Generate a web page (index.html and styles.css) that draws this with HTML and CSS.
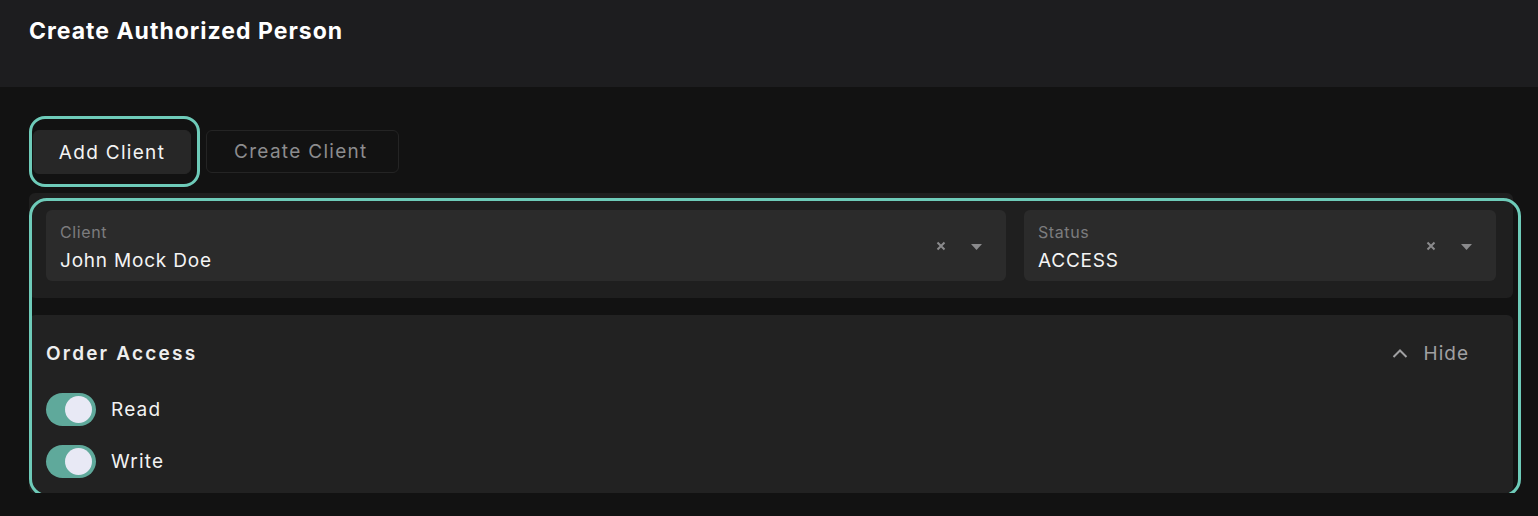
FILE: index.html
```html
<!DOCTYPE html>
<html>
<head>
  <title>Create Authorized Person</title>
  <link rel="stylesheet" href="styles.css">
</head>
<body>
  <header class="page-header">
    <h1 class="page-title">Create Authorized Person</h1>
  </header>

  <main class="page-body">
    <div class="tabs">
      <button class="tab tab-active">Add Client</button>
      <button class="tab">Create Client</button>
    </div>

    <div class="access-card">
      <div class="select-panel">
        <div class="select-field">
          <div class="select-text">
            <span class="select-label">Client</span>
            <span class="select-value">John Mock Doe</span>
          </div>
          <div class="select-icons">
            <svg class="icon-clear" width="10" height="10" viewBox="0 0 10 10"><path d="M1.5 1.5L8.5 8.5M8.5 1.5L1.5 8.5" stroke="#8a8a8c" stroke-width="2"/></svg>
            <svg class="icon-caret" width="11" height="6" viewBox="0 0 11 6"><polygon points="0,0 11,0 5.5,6" fill="#8a8a8c"/></svg>
          </div>
        </div>
        <div class="select-field">
          <div class="select-text">
            <span class="select-label">Status</span>
            <span class="select-value">ACCESS</span>
          </div>
          <div class="select-icons">
            <svg class="icon-clear" width="10" height="10" viewBox="0 0 10 10"><path d="M1.5 1.5L8.5 8.5M8.5 1.5L1.5 8.5" stroke="#8a8a8c" stroke-width="2"/></svg>
            <svg class="icon-caret" width="11" height="6" viewBox="0 0 11 6"><polygon points="0,0 11,0 5.5,6" fill="#8a8a8c"/></svg>
          </div>
        </div>
      </div>

      <div class="perm-panel">
        <div class="perm-head">
          <span class="perm-title">Order Access</span>
          <button class="hide-btn">
            <svg width="16" height="9" viewBox="0 0 16 9"><polyline points="1.5,8 8,1.5 14.5,8" fill="none" stroke="#a0a0a2" stroke-width="2"/></svg>
            Hide
          </button>
        </div>
        <label class="perm-row">
          <span class="switch"><span class="knob"></span></span>
          Read
        </label>
        <label class="perm-row">
          <span class="switch"><span class="knob"></span></span>
          Write
        </label>
      </div>
    </div>
  </main>
</body>
</html>
```

FILE: styles.css
```css
body {
  margin: 0;
  background-color: #121212;
  font-family: Inter, "Noto Sans", sans-serif;
  color: #f2f2f2;
}

.page-header {
  height: 87px;
  box-sizing: border-box;
  padding: 16px 29px 0;
  background-color: #1d1d1f;
}
.page-title {
  margin: 0;
  font-size: 23px;
  line-height: 30px;
  font-weight: 700;
  letter-spacing: 1px;
  color: #ffffff;
}

.page-body {
  padding: 43px 25px 0 29px;
}

.tabs {
  display: flex;
  gap: 15px;
  padding-left: 4px;
  margin-bottom: 19px;
}
.tab {
  position: relative;
  height: 43px;
  padding: 0 30px 0 27px;
  border: 1px solid #242424;
  border-radius: 6px;
  background-color: #121212;
  color: #8c8c8e;
  font-family: inherit;
  font-size: 19px;
  letter-spacing: 1.3px;
}
.tab-active {
  width: 158px;
  padding: 0;
  height: 44px;
  border-color: #272727;
  background-color: #272727;
  color: #f4f4f4;
}
/* focus ring */
.tab-active::after {
  content: "";
  position: absolute;
  left: -5px;
  top: -15px;
  right: -10px;
  bottom: -14px;
  border: 3px solid #6ecbb9;
  border-radius: 16px;
}

.access-card {
  position: relative;
  display: flex;
  flex-direction: column;
  gap: 17px;
}
.access-card::after {
  content: "";
  position: absolute;
  left: 0;
  top: 5px;
  right: -8px;
  bottom: -4px;
  border: 3px solid #6ecbb9;
  border-radius: 18px;
  pointer-events: none;
}

.select-panel {
  display: grid;
  grid-template-columns: 1fr 472px;
  gap: 18px;
  padding: 17px;
  border-radius: 6px;
  background-color: #1f1f1f;
}
.select-field {
  display: flex;
  align-items: center;
  height: 71px;
  padding: 0 24px 0 14px;
  box-sizing: border-box;
  border-radius: 6px;
  background-color: #2b2b2b;
}
.select-text {
  flex: 1;
  display: flex;
  flex-direction: column;
  gap: 6px;
  padding-top: 5px;
}
.select-label {
  font-size: 16px;
  line-height: 20px;
  color: #7c7c7e;
  letter-spacing: 0.6px;
}
.select-value {
  font-size: 19px;
  line-height: 26px;
  color: #f4f4f4;
  letter-spacing: 0.8px;
}
.select-icons {
  display: flex;
  align-items: center;
  gap: 25px;
}
.icon-caret {
  margin-top: 2px;
}

.perm-panel {
  padding: 23px 17px 15px;
  border-radius: 6px;
  background-color: #222222;
}
.perm-head {
  display: flex;
  justify-content: space-between;
  align-items: center;
  height: 30px;
  margin-bottom: 25px;
}
.perm-title {
  font-size: 19px;
  font-weight: 600;
  letter-spacing: 2.2px;
  color: #eeeeee;
}
.hide-btn {
  display: flex;
  align-items: center;
  gap: 16px;
  padding: 0 27px 0 0;
  border: none;
  background: none;
  color: #a0a0a2;
  font-family: inherit;
  font-size: 19px;
  letter-spacing: 1px;
}

.perm-row {
  display: flex;
  align-items: center;
  gap: 15px;
  font-size: 19px;
  letter-spacing: 1.2px;
  color: #f2f2f2;
}
.perm-row + .perm-row {
  margin-top: 19px;
}
.switch {
  display: flex;
  align-items: center;
  justify-content: flex-end;
  width: 50px;
  height: 33px;
  padding-right: 4px;
  box-sizing: border-box;
  border-radius: 17px;
  background-color: #5fa99b;
}
.knob {
  width: 27px;
  height: 27px;
  border-radius: 50%;
  background-color: #e8e9f5;
}
```
